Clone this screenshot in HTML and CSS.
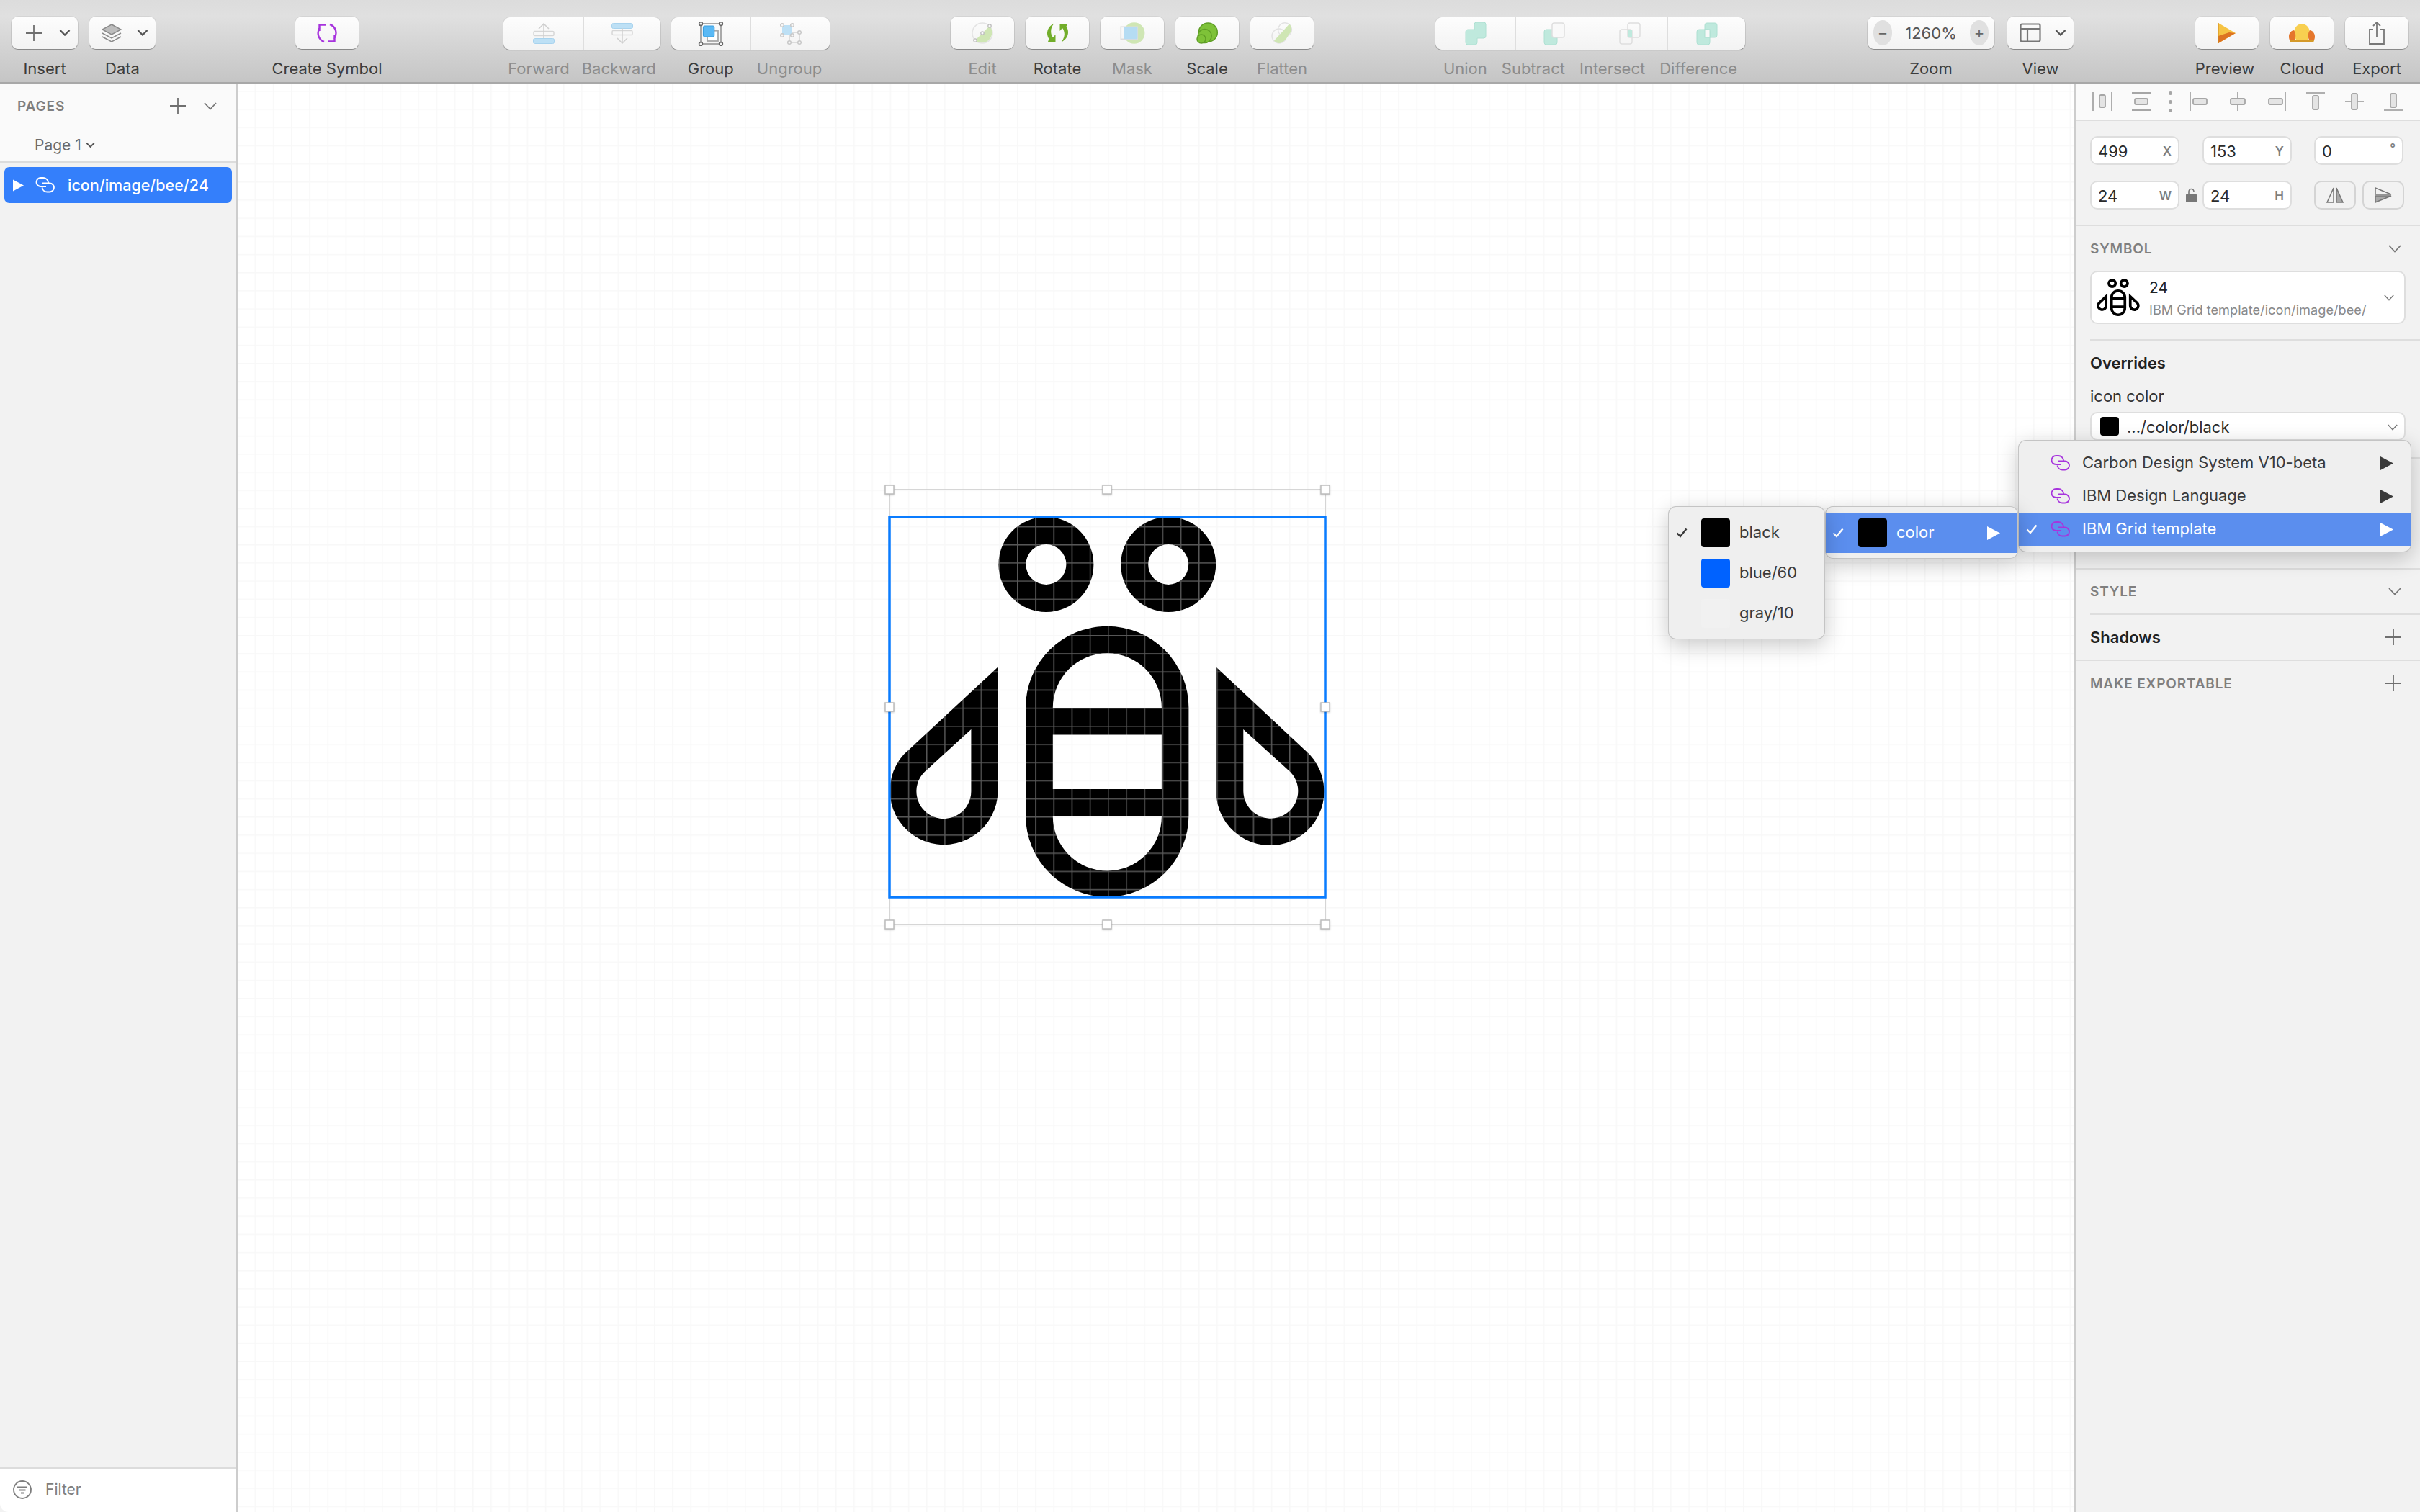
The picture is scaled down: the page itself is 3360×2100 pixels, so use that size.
FILE: index.html
```html
<!doctype html>
<html lang="en">
<head>
	<meta charset="UTF-8" />
	<title>icon/image/bee/24</title>
	<link rel="stylesheet" href="styles.css">
</head>
<body>
<svg class="defs" aria-hidden="true">
	<defs>
		<symbol id="chev" viewBox="0 0 18 11"><path d="M1 1l8 8.5L17 1" fill="none" stroke="currentColor" stroke-width="1.8"/></symbol>
		<symbol id="chev-b" viewBox="0 0 16 9"><path d="M1.500 1l6.500 6.500L14.500 1" fill="none" stroke="currentColor" stroke-width="2.400"/></symbol>
		<symbol id="plus" viewBox="0 0 22 22"><path d="M11 0v22M0 11h22" fill="none" stroke="currentColor" stroke-width="1.8"/></symbol>
		<symbol id="link" viewBox="0 0 30 22"><path d="M16 13H8.5a6 6 0 0 1 0-12h3.500a7 7 0 0 1 7 6.500M11 8.500h10a6 6 0 0 1 0 12h-3.500a7 7 0 0 1-7-6" fill="none" stroke="currentColor" stroke-width="1.800"/></symbol>
		<symbol id="tri" viewBox="0 0 18 19"><path d="M0 0l18 9.500L0 19z" fill="currentColor"/></symbol>
		<symbol id="tick" viewBox="0 0 16 14"><path d="M1.500 7.500l4.500 4.500L14.500 1.500" fill="none" stroke="currentColor" stroke-width="2.400"/></symbol>
		<pattern id="grid" patternUnits="userSpaceOnUse" x="1412" y="882" width="25.2" height="25.2">
			<rect width="25.2" height="25.2" fill="#fff"/>
			<rect width="1.5" height="25.2" fill="#f8f8f8"/>
			<rect width="25.2" height="1.5" fill="#f8f8f8"/>
		</pattern>
		<pattern id="ink" patternUnits="userSpaceOnUse" x="1412" y="882" width="25.2" height="25.2">
			<rect width="25.2" height="25.2" fill="#000"/>
			<rect width="1.5" height="25.2" fill="#585858"/>
			<rect width="25.2" height="1.5" fill="#585858"/>
		</pattern>
		<path id="bee" fill-rule="evenodd" d="M1386.400 784a66 66 0 1 1 132 0a66 66 0 1 1-132 0zM1424.400 784a28 28 0 1 0 56 0a28 28 0 1 0-56 0zM1556.200 784a66 66 0 1 1 132 0a66 66 0 1 1-132 0zM1594.200 784a28 28 0 1 0 56 0a28 28 0 1 0-56 0zM1424 982.900A113.200 113.200 0 0 1 1650.400 982.900V1132.500A113.200 113.200 0 0 1 1424 1132.500ZM1461.800 982.900H1612.900A75.500 75.500 0 0 0 1461.800 982.900ZM1461.800 1020.400V1095.900H1612.900V1020.400ZM1461.800 1133.900A75.500 75.500 0 0 0 1612.900 1133.900ZM1385.500 926.500V1098.800A75 75 0 1 1 1254.900 1047.800ZM1348.400 1013L1283.500 1072.200A38 38 0 1 0 1348.400 1098.800ZM1688.500 926.500L1818.200 1047.800A75 75 0 1 1 1688.500 1098.800ZM1726.300 1013V1098.800A38 38 0 1 0 1791.600 1072.200Z"/>
	</defs>
</svg>

<div class="app">
	<header class="toolbar">
		<div class="tool">
			<div class="btn btn-split"><svg class="ico-plus"><use href="#plus"/></svg><svg class="ico-chev"><use href="#chev-b"/></svg></div>
			<span class="lbl">Insert</span>
		</div>
		<div class="tool ml-16">
			<div class="btn btn-split btn-data">
				<svg width="28" height="26" viewBox="0 0 28 26"><path d="M14 1l13 7-13 7L1 8z" fill="#bdbdbd" stroke="#8a8a8a" stroke-width="1.500"/><path d="M1 13l13 7 13-7M1 18l13 7 13-7" fill="none" stroke="#8a8a8a" stroke-width="1.500"/></svg>
				<svg class="ico-chev"><use href="#chev-b"/></svg>
			</div>
			<span class="lbl">Data</span>
		</div>
		<div class="tool ml-194 w-88">
			<div class="btn">
				<svg width="28" height="28" viewBox="-1 -1 28 28" fill="none" stroke="#a734dd" stroke-width="2.400"><path d="M3 5C-1.500 12 .5 22 9 25M11 1.500H2.500V10"/><path d="M17 1C26 4 27.500 14 23 21M15 24.500h8.500V16"/></svg>
			</div>
			<span class="lbl">Create Symbol</span>
		</div>

		<div class="seg-tool ml-201">
			<div class="seg">
				<div class="seg-btn w-111"><svg width="30" height="29" viewBox="0 0 30 29" fill="none"><rect x="1" y="11.500" width="28" height="6" rx="1.500" stroke="#d6d6d6" stroke-width="1.500"/><path d="M15 22V1M8 8l7-7 7 7" stroke="#cfcfcf" stroke-width="1.500"/><rect x="0.500" y="21.500" width="29" height="7" rx="2" fill="#bde0f5" stroke="#a8d3ee"/></svg></div>
				<div class="seg-btn w-107"><svg width="30" height="29" viewBox="0 0 30 29" fill="none"><rect x="0.500" y="0.500" width="29" height="7" rx="2" fill="#bde0f5" stroke="#a8d3ee"/><rect x="1" y="10.500" width="28" height="6" rx="1.500" stroke="#d6d6d6" stroke-width="1.500"/><path d="M15 7v21M8 21l7 7 7-7" stroke="#cfcfcf" stroke-width="1.500"/></svg></div>
			</div>
			<div class="seg-lbls gap-17"><span class="lbl off">Forward</span><span class="lbl off">Backward</span></div>
		</div>
		<div class="seg-tool ml-15">
			<div class="seg">
				<div class="seg-btn w-110"><svg width="36" height="34" viewBox="0 0 36 34" fill="none"><rect x="4" y="3" width="28" height="28" stroke="#a0a0a0" stroke-width="1.800"/><rect x="13" y="12.700" width="15" height="14.300" fill="#fff" stroke="#a8a8a8" stroke-width="1.800"/><rect x="7.500" y="6" width="15.200" height="15" rx="2" fill="#5ab9f5" stroke="#3a9fe0" stroke-width="1.200"/><g fill="#f6f6f6" stroke="#666" stroke-width="1.600"><circle cx="4" cy="3" r="2.400"/><circle cx="32" cy="3" r="2.400"/><circle cx="4" cy="31" r="2.400"/><circle cx="32" cy="31" r="2.400"/></g></svg></div>
				<div class="seg-btn w-110"><svg width="30" height="32" viewBox="0 0 30 32" fill="none"><rect x="13" y="14" width="14" height="14" stroke="#d4d4d4" stroke-width="1.500"/><rect x="3" y="4" width="14" height="14" rx="1.500" fill="#bde0f5"/><g fill="#f6f6f6" stroke="#c8c8c8" stroke-width="1.500"><circle cx="3" cy="4" r="2.300"/><circle cx="17" cy="4" r="2.300"/><circle cx="3" cy="18" r="2.300"/><circle cx="17" cy="18" r="2.300"/><circle cx="27" cy="14" r="2.300"/><circle cx="13" cy="28" r="2.300"/><circle cx="27" cy="28" r="2.300"/></g></svg></div>
			</div>
			<div class="seg-lbls gap-32 seg-lbls-r"><span class="lbl">Group</span><span class="lbl off">Ungroup</span></div>
		</div>

		<div class="tool ml-168 w-88">
			<div class="btn"><svg width="32" height="32" viewBox="0 0 32 32" fill="none"><circle cx="16" cy="16" r="14" stroke="#e4e4e4" stroke-width="1.500"/><path d="M26 6A14.200 14.200 0 0 1 6 26Z" fill="#cfe6b4"/><g fill="#fafafa" stroke="#bdbdbd" stroke-width="1.300"><circle cx="26" cy="6" r="2.200"/><circle cx="16" cy="16" r="2.200"/><circle cx="6" cy="26" r="2.200"/></g></svg></div>
			<span class="lbl off">Edit</span>
		</div>
		<div class="tool ml-16 w-88">
			<div class="btn"><svg width="31" height="27" viewBox="0 0 31 27" fill="#72ad2a"><path id="rot" d="M10.500.5C1 5-1.500 15 3.500 22L2 26h10.500V16L9 20C5 15 5 7 10.500.5Z"/><use href="#rot" transform="rotate(180 15.500 13.500)"/></svg></div>
			<span class="lbl">Rotate</span>
		</div>
		<div class="tool ml-16 w-88">
			<div class="btn"><svg width="36" height="32" viewBox="0 0 36 32"><circle cx="20.700" cy="16" r="14.700" fill="#cfe6b4"/><rect x="2.300" y="7.300" width="23" height="17" fill="none" stroke="#dcdcdc" stroke-width="1.600"/><rect x="6.700" y="7.300" width="18.600" height="17" rx="1.500" fill="#b5dcf3"/></svg></div>
			<span class="lbl off">Mask</span>
		</div>
		<div class="tool ml-16 w-88">
			<div class="btn"><svg width="32" height="32" viewBox="0 0 32 32" fill="#7ec238" stroke="#5f9e26" stroke-width="1.500"><circle cx="17.300" cy="15" r="13"/><circle cx="12.700" cy="20" r="9.500"/><circle cx="8" cy="24" r="6"/></svg></div>
			<span class="lbl">Scale</span>
		</div>
		<div class="tool ml-16 w-88">
			<div class="btn"><svg width="32" height="32" viewBox="0 0 32 32" fill="none"><circle cx="20" cy="11.300" r="9.500" stroke="#e2e2e2" stroke-width="1.500"/><circle cx="12" cy="20" r="10" stroke="#e2e2e2" stroke-width="1.500"/><path d="M26 3.500C31 8 30 15 25 18C23 24 17 30 12 30C9 30 7 28.500 5 26.500Z" fill="#cfe6b4"/></svg></div>
			<span class="lbl off">Flatten</span>
		</div>

		<div class="seg-tool ml-169">
			<div class="seg">
				<div class="seg-btn w-111"><svg width="30" height="31" viewBox="0 0 30 31"><path d="M13 3a3 3 0 0 1 3-3h10a3 3 0 0 1 3 3v16a3 3 0 0 1-3 3h-9v6a3 3 0 0 1-3 3H4a3 3 0 0 1-3-3V13a3 3 0 0 1 3-3h9z" fill="#bfe9dd" stroke="#aee0d2"/></svg></div>
				<div class="seg-btn w-106"><svg width="30" height="31" viewBox="0 0 30 31"><rect x="1" y="10" width="18" height="21" rx="3" fill="#bfe9dd" stroke="#aee0d2"/><rect x="12" y="1" width="17" height="20" rx="3" fill="#f9f9f9" stroke="#dedede" stroke-width="1.500"/></svg></div>
				<div class="seg-btn w-105"><svg width="30" height="31" viewBox="0 0 30 31" fill="none"><rect x="1" y="10" width="17" height="20" rx="3" stroke="#dedede" stroke-width="1.500"/><rect x="12" y="1" width="17" height="20" rx="3" stroke="#dedede" stroke-width="1.500"/><rect x="12" y="10" width="6" height="11" fill="#bfe9dd"/></svg></div>
				<div class="seg-btn w-108"><svg width="30" height="31" viewBox="0 0 30 31"><rect x="12" y="1" width="17" height="20" rx="3" fill="#bfe9dd" stroke="#aee0d2"/><rect x="1" y="10" width="18" height="21" rx="3" fill="#bfe9dd" stroke="#aee0d2"/><rect x="12" y="10" width="7" height="11" fill="#f8f8f8" stroke="#aee0d2"/></svg></div>
			</div>
			<div class="seg-lbls gap-20"><span class="lbl off">Union</span><span class="lbl off">Subtract</span><span class="lbl off">Intersect</span><span class="lbl off">Difference</span></div>
		</div>

		<div class="tool ml-170 w-176">
			<div class="btn btn-zoom">
				<span class="zoom-dot">&#8722;</span><span class="zoom-val">1260%</span><span class="zoom-dot">+</span>
			</div>
			<span class="lbl">Zoom</span>
		</div>
		<div class="tool ml-18">
			<div class="btn btn-split btn-data">
				<svg width="30" height="27" viewBox="0 0 30 27" fill="none" stroke="#777" stroke-width="2.200"><rect x="1.500" y="1.500" width="27" height="24" rx="2"/><path d="M1.500 8h27M11 8v17"/></svg>
				<svg class="ico-chev"><use href="#chev-b"/></svg>
			</div>
			<span class="lbl">View</span>
		</div>

		<div class="tool ml-169 w-88">
			<div class="btn"><svg width="26" height="28" viewBox="0 0 26 28"><path d="M1 0l24 14L1 28z" fill="#f6c343"/><path d="M1 28l24-14-9-1L1 18z" fill="#dd7421"/><path d="M1 0v28" stroke="#d08a1e"/></svg></div>
			<span class="lbl lbl-preview">Preview</span>
		</div>
		<div class="tool ml-16 w-88">
			<div class="btn"><svg width="38" height="26" viewBox="0 0 38 26"><ellipse cx="19" cy="13" rx="11" ry="13" fill="#f8cf50"/><path d="M3 24c-4-5-2-14 5-15 3 4 3 11 0 15zM35 24c4-5 2-14-5-15-3 4-3 11 0 15z" fill="#e5762c"/><path d="M2 23h34l-1 3H3z" fill="#d59a2a"/></svg></div>
			<span class="lbl">Cloud</span>
		</div>
		<div class="tool ml-16 w-88">
			<div class="btn"><svg width="24" height="32" viewBox="0 0 24 32" fill="none" stroke="#777" stroke-width="1.800"><path d="M7 11H2v20h20V11h-5"/><path d="M12 22V1M7 6l5-5 5 5"/></svg></div>
			<span class="lbl">Export</span>
		</div>
	</header>

	<div class="main">
		<aside class="left">
			<div class="pages">
				<div class="pages-head">
					<span class="cap">PAGES</span>
					<svg class="ico-plus"><use href="#plus"/></svg>
					<svg class="ico-chevp"><use href="#chev"/></svg>
				</div>
				<div class="page-row">Page 1 <svg class="ico-chev ico-chev-s"><use href="#chev-b"/></svg></div>
			</div>
			<div class="layers">
				<div class="layer">
					<svg class="layer-tri"><use href="#tri"/></svg>
					<svg class="ico-link"><use href="#link"/></svg>
					<span>icon/image/bee/24</span>
				</div>
			</div>
			<div class="filter">
				<svg width="26" height="26" viewBox="0 0 26 26" fill="none" stroke="#7d7d7d" stroke-width="1.800"><circle cx="13" cy="13" r="12"/><path d="M6 9.500h14M8.500 13.500h9M11 17.500h4"/></svg>
				<span>Filter</span>
			</div>
		</aside>

		<main class="canvas">
			<svg width="2550" height="1984" viewBox="330 116 2550 1984">
				<rect x="330" y="116" width="2550" height="1984" fill="url(#grid)"/>
				<rect x="1235" y="680" width="605" height="604" fill="none" stroke="#c9c9c9" stroke-width="1.500"/>
				<use href="#bee" fill="url(#ink)"/>
				<rect x="1235" y="718" width="605" height="528" fill="none" stroke="#0a7cff" stroke-width="3.500"/>
				<g class="handles">
					<rect x="1229" y="674" width="12" height="12"/><rect x="1531" y="674" width="12" height="12"/><rect x="1834" y="674" width="12" height="12"/>
					<rect x="1229" y="976" width="12" height="12"/><rect x="1834" y="976" width="12" height="12"/>
					<rect x="1229" y="1278" width="12" height="12"/><rect x="1531" y="1278" width="12" height="12"/><rect x="1834" y="1278" width="12" height="12"/>
				</g>
			</svg>
		</main>

		<aside class="right">
			<div class="aligns">
				<svg class="al" viewBox="0 0 54 26"><path d="M14 0v26M40 0v26"/><rect x="23" y="4" width="8" height="17" rx="2"/></svg>
				<svg class="al" viewBox="0 0 54 26"><path d="M14 1h26M14 25h26"/><rect x="18" y="9" width="18" height="8" rx="2"/></svg>
				<div class="dots"><i></i><i></i><i></i></div>
				<svg class="al" viewBox="0 0 54 26"><path d="M15 0v26"/><rect x="19" y="9" width="19" height="8" rx="2"/></svg>
				<svg class="al" viewBox="0 0 54 26"><path d="M27 0v26"/><rect x="17" y="9" width="20" height="8" rx="2"/></svg>
				<svg class="al" viewBox="0 0 54 26"><path d="M39 0v26"/><rect x="16" y="9" width="19" height="8" rx="2"/></svg>
				<svg class="al" viewBox="0 0 54 26"><path d="M14 1h26"/><rect x="23" y="5" width="8" height="19" rx="2"/></svg>
				<svg class="al" viewBox="0 0 54 26"><path d="M14 13h26"/><rect x="23" y="2" width="8" height="22" rx="2"/></svg>
				<svg class="al" viewBox="0 0 54 26"><path d="M14 25h26"/><rect x="23" y="2" width="8" height="19" rx="2"/></svg>
			</div>

			<div class="geom">
				<div class="geom-row">
					<div class="field"><span>499</span><b>X</b></div>
					<div class="geom-gap"></div>
					<div class="field"><span>153</span><b>Y</b></div>
					<div class="geom-gap geom-gap-s"></div>
					<div class="field"><span>0</span><b class="deg">&deg;</b></div>
				</div>
				<div class="geom-row">
					<div class="field"><span>24</span><b>W</b></div>
					<div class="geom-gap"><svg width="15" height="20" viewBox="0 0 15 20"><rect y="8" width="15" height="12" rx="1.500" fill="#777"/><path d="M4 8V5a3.500 3.500 0 0 1 7 0" fill="none" stroke="#777" stroke-width="1.600"/></svg></div>
					<div class="field"><span>24</span><b>H</b></div>
					<div class="geom-gap geom-gap-s"></div>
					<div class="flip">
						<div class="flip-btn"><svg width="24" height="22" viewBox="0 0 24 22" stroke="#777" stroke-width="1.500"><path d="M10 1L1 21h9z" fill="none"/><path d="M14 1l9 20h-9z" fill="#a9a9a9"/></svg></div>
						<div class="flip-btn"><svg width="24" height="22" viewBox="0 0 24 22" stroke="#777" stroke-width="1.500"><path d="M1 1l22 9H1z" fill="none"/><path d="M1 21l22-9H1z" fill="#a9a9a9"/></svg></div>
					</div>
				</div>
			</div>

			<div class="sec-head h-62"><span class="cap">SYMBOL</span><svg class="ico-chevp"><use href="#chev"/></svg></div>
			<div class="sym-card">
				<svg class="sym-thumb" viewBox="1235 718 605 528"><use href="#bee" fill="#000"/></svg>
				<div class="sym-text">
					<div class="sym-name">24</div>
					<div class="sym-path">IBM Grid template/icon/image/bee/</div>
				</div>
				<svg class="ico-chevs"><use href="#chev"/></svg>
			</div>
			<div class="rule-inset mt-21"></div>

			<div class="overrides-title">Overrides</div>
			<div class="override-name">icon color</div>
			<div class="select">
				<i class="sw sw-s sw-black"></i>
				<span>.../color/black</span>
				<svg class="ico-chevs"><use href="#chev"/></svg>
			</div>
			<div class="spacer"></div>

			<div class="sec-head h-61"><span class="cap">STYLE</span><svg class="ico-chevp"><use href="#chev"/></svg></div>
			<div class="rule-inset"></div>
			<div class="sec-head h-63 sec-rule"><span class="strong">Shadows</span><svg class="ico-plus"><use href="#plus"/></svg></div>
			<div class="sec-head h-62"><span class="cap">MAKE EXPORTABLE</span><svg class="ico-plus"><use href="#plus"/></svg></div>
		</aside>
	</div>

	<div class="menu menu-lib">
		<div class="mi">
			<svg class="ico-link mi-link"><use href="#link"/></svg><span class="mi-text">Carbon Design System V10-beta</span><svg class="mi-tri"><use href="#tri"/></svg>
		</div>
		<div class="mi">
			<svg class="ico-link mi-link"><use href="#link"/></svg><span class="mi-text">IBM Design Language</span><svg class="mi-tri"><use href="#tri"/></svg>
		</div>
		<div class="mi on">
			<svg class="mi-tick"><use href="#tick"/></svg>
			<svg class="ico-link mi-link"><use href="#link"/></svg><span class="mi-text">IBM Grid template</span><svg class="mi-tri"><use href="#tri"/></svg>
		</div>
	</div>
	<div class="menu menu-color">
		<div class="mi mi-56 on">
			<svg class="mi-tick"><use href="#tick"/></svg>
			<i class="sw sw-black"></i><span class="mi-text">color</span><svg class="mi-tri"><use href="#tri"/></svg>
		</div>
	</div>
	<div class="menu menu-swatch">
		<div class="mi mi-56">
			<svg class="mi-tick"><use href="#tick"/></svg>
			<i class="sw sw-black"></i><span class="mi-text">black</span>
		</div>
		<div class="mi mi-56"><i class="sw sw-blue"></i><span class="mi-text">blue/60</span></div>
		<div class="mi mi-56"><i class="sw sw-gray"></i><span class="mi-text">gray/10</span></div>
	</div>
</div>
</body>
</html>
```

FILE: styles.css
```css
*{box-sizing: border-box;}
html,body{margin: 0;padding: 0;background: #f2f2f2;}
body{font-family: "Inter", "Liberation Sans", sans-serif;font-size: 21px;color: #2b2b2b;}
svg{display: block;flex: none;}
.defs{position: absolute;width: 0;height: 0;}

.app{position: relative;width: 3360px;height: 2100px;overflow: hidden;display: flex;flex-direction: column;}

/* toolbar */
.toolbar{height: 116px;flex: none;display: flex;padding: 23px 0 0 16px;background: linear-gradient(#dcdcdc, #e0e0e0 20%, #c5c5c5);border-bottom: 2px solid #a8a8a8;}
.tool{width: 92px;display: flex;flex-direction: column;align-items: center;}
.seg-tool{display: flex;flex-direction: column;align-items: center;}
.btn{width: 100%;height: 45px;display: flex;align-items: center;justify-content: center;background: linear-gradient(#fdfdfd, #f3f3f3);border-radius: 9px;box-shadow: 0 1px 1px rgba(0,0,0,.35), 0 0 0 1px rgba(0,0,0,.05);}
.btn-split{justify-content: space-between;padding: 0 10px 0 20px;}
.btn-data{padding-left: 17px;}
.lbl{margin-top: 14px;height: 26px;line-height: 26px;white-space: nowrap;color: #3c3c3c;font-size: 22px;}
.lbl.off{color: #8c8c8c;}
.lbl-preview{margin-right: 6px;}

.seg{margin-top: 1px;height: 45px;display: flex;background: linear-gradient(#fdfdfd, #f3f3f3);border-radius: 9px;box-shadow: 0 1px 1px rgba(0,0,0,.35), 0 0 0 1px rgba(0,0,0,.05);}
.seg-btn{height: 45px;display: flex;align-items: center;justify-content: center;border-left: 1px solid #dedede;}
.seg-btn:first-child{border-left: 0;}
.seg-lbls{display: flex;margin-top: -1px;}
.seg-lbls-r{padding-left: 12px;}

.ml-15{margin-left: 15px;}
.ml-16{margin-left: 16px;}
.ml-18{margin-left: 18px;}
.ml-168{margin-left: 168px;}
.ml-169{margin-left: 169px;}
.ml-170{margin-left: 170px;}
.ml-194{margin-left: 194px;}
.ml-201{margin-left: 201px;}
.w-88{width: 88px;}
.w-105{width: 105px;}
.w-106{width: 106px;}
.w-107{width: 107px;}
.w-108{width: 108px;}
.w-110{width: 110px;}
.w-111{width: 111px;}
.w-176{width: 176px;}
.gap-17{gap: 17px;}
.gap-20{gap: 20px;}
.gap-32{gap: 32px;}

.ico-plus{width: 22px;height: 22px;color: #6f6f6f;}
.ico-chev{width: 16px;height: 9px;color: #555;}
.ico-chev-s{width: 13px;margin-left: 6px;}
.ico-chevp{width: 18px;height: 11px;color: #777;}
.ico-chevs{width: 14px;height: 9px;color: #777;}
.ico-link{width: 30px;height: 22px;}

.btn-zoom{justify-content: space-between;padding: 0 8px;}
.zoom-dot{width: 26px;height: 35px;border-radius: 13px / 17px;background: #e0e0e0;text-align: center;line-height: 34px;color: #666;font-size: 22px;}
.zoom-val{color: #555;font-size: 22px;}

/* panels */
.main{flex: 1;display: flex;min-height: 0;}
.left{width: 330px;flex: none;display: flex;flex-direction: column;background: #f2f2f2;border-right: 2px solid #cdcdcd;border-bottom-left-radius: 12px;}
.pages{height: 111px;flex: none;background: #fafafa;border-bottom: 3px solid #dcdcdc;}
.pages-head{height: 62px;display: flex;align-items: center;padding: 0 27px 0 24px;}
.pages-head .cap{flex: 1;}
.pages-head .ico-plus{margin-right: 25px;}
.page-row{height: 46px;display: flex;align-items: center;padding-left: 48px;color: #6b6b6b;}
.cap{font-size: 19px;font-weight: 600;letter-spacing: .85px;color: #7f7f7f;}
.layers{flex: 1;padding: 5px 6px;}
.layer{height: 50px;display: flex;align-items: center;padding-left: 12px;background: #347ffb;border-radius: 7px;color: #fff;font-size: 21.500px;font-weight: 500;}
.layer-tri{width: 15px;height: 17px;color: #fff;}
.layer .ico-link{margin: 0 16px 0 15px;}
.filter{height: 63px;flex: none;display: flex;align-items: center;gap: 19px;padding: 0 0 3px 18px;background: #fff;border-top: 3px solid #dcdcdc;color: #7d7d7d;border-bottom-left-radius: 12px;}

.canvas{flex: 1;min-width: 0;background: #fff;overflow: hidden;}
.handles rect{fill: #fff;stroke: #bdbdbd;stroke-width: 1.500;filter: drop-shadow(0 1px 1px rgba(0,0,0,.2));}

.right{width: 480px;flex: none;background: #f2f2f2;border-left: 2px solid #cdcdcd;}
.aligns{height: 52px;display: flex;align-items: center;padding-left: 10px;background: #fafafa;border-bottom: 2px solid #dedede;}
.al{width: 54px;height: 26px;fill: #e4e4e4;stroke: #a6a6a6;stroke-width: 1.800;}
.dots{width: 26px;display: flex;flex-direction: column;align-items: center;gap: 7px;}
.dots i{width: 5px;height: 5px;border-radius: 50%;background: #a6a6a6;}

.geom{padding: 21px 21px 21px 20px;border-bottom: 2px solid #dedede;}
.geom-row{display: flex;height: 40px;margin-bottom: 22px;}
.geom-row:last-child{margin-bottom: 0;}
.field{width: 124px;display: flex;align-items: center;justify-content: space-between;padding: 2px 9px 0 9px;background: #fff;border: 2px solid #dedede;border-radius: 10px;font-size: 22px;color: #2b2b2b;}
.field b{font-size: 17px;font-weight: 600;color: #7f7f7f;}
.field b.deg{align-self: flex-start;margin-top: 3px;}
.geom-gap{width: 32px;display: flex;align-items: center;justify-content: center;}
.geom-gap-s{width: 31px;}
.flip{width: 125px;display: flex;justify-content: space-between;}
.flip-btn{width: 58px;display: flex;align-items: center;justify-content: center;border: 2px solid #d4d4d4;border-radius: 10px;}

.sec-head{display: flex;align-items: center;justify-content: space-between;padding: 0 26px 0 20px;}
.h-61{height: 61px;}
.h-62{height: 62px;}
.h-63{height: 64px;}
.sec-rule{border-bottom: 2px solid #dedede;}
.strong{font-size: 22px;font-weight: 600;color: #222;}
.sym-card{height: 74px;margin: 0 20px 0 20px;display: flex;align-items: center;padding: 0 14px 0 7px;background: #fff;border: 2px solid #dedede;border-radius: 10px;}
.sym-thumb{width: 60px;height: 52px;margin-right: 13px;}
.sym-text{flex: 1;padding-top: 2px;}
.sym-name{font-size: 21px;line-height: 28px;color: #222;}
.sym-path{font-size: 18.200px;line-height: 26px;margin-top: 3px;color: #8a8a8a;white-space: nowrap;}
.rule-inset{height: 2px;margin-left: 20px;background: #dedede;}
.mt-21{margin-top: 21px;}

.overrides-title{height: 58px;padding: 2px 0 0 20px;line-height: 58px;font-size: 22px;font-weight: 600;color: #222;}
.override-name{height: 36px;padding: 1px 0 0 20px;line-height: 36px;font-size: 22px;color: #333;}
.select{height: 40px;margin: 5px 20px 0 20px;display: flex;align-items: center;padding: 2px 9px 0 12px;background: #fff;border: 2px solid #dedede;border-radius: 10px;font-size: 22px;}
.select span{flex: 1;margin-left: 11px;}
.spacer{height: 156px;margin-top: 23px;border-top: 2px solid #dedede;border-bottom: 2px solid #dedede;}

.sw{width: 40px;height: 40px;flex: none;border-radius: 4px;}
.sw-s{width: 26px;height: 26px;margin-top: -2px;}
.sw-black{background: #000;}
.sw-blue{background: #0062ff;}
.sw-gray{background: #f1f1f1;}

/* open menus */
.menu{position: absolute;background: #efefef;border: 1px solid rgba(0,0,0,.18);border-radius: 11px;padding: 8px 0;box-shadow: 0 8px 30px rgba(0,0,0,.22);font-size: 22px;color: #3a3a3a;}
.menu-lib{left: 2802px;top: 611px;width: 546px;height: 156px;}
.menu-color{left: 2534px;top: 703px;width: 268px;height: 73px;}
.menu-swatch{left: 2316px;top: 703px;width: 218px;height: 185px;}
.mi{position: relative;height: 46px;display: flex;align-items: center;}
.mi-56{height: 56px;}
.mi.on{background: #5b8eee;color: #fff;}
.mi-tick{position: absolute;width: 16px;height: 14px;top: calc(50% - 7px);color: #3a3a3a;}
.mi.on .mi-tick{color: #fff;}
.mi-link{color: #a734dd;margin-left: 43px;}
.mi-text{margin-left: 15px;flex: 1;white-space: nowrap;margin-bottom: 3px;}
.mi-tri{width: 18px;height: 19px;color: #3a3a3a;margin-right: 24px;}
.mi.on .mi-tri{color: #fff;}
.menu-lib .mi-tick{left: 10px;}
.menu-color .mi-tick{left: 9px;}
.menu-color .sw{margin-left: 45px;}
.menu-color .mi-text{margin-left: 13px;}
.menu-swatch .mi-tick{left: 10px;}
.menu-swatch .sw{margin-left: 45px;}
.menu-swatch .mi-text{margin-left: 13px;}
```
